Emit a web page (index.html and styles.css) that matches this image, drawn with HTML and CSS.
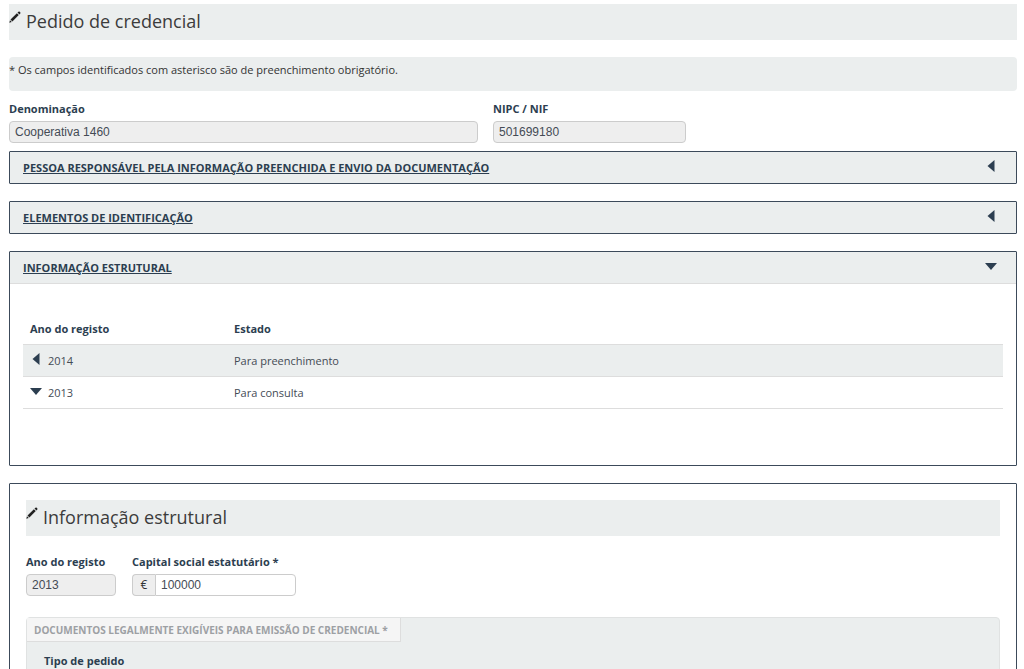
FILE: index.html
```html
<!DOCTYPE html>
<html lang="pt">
<head>
<meta charset="utf-8">
<title>Pedido de credencial</title>
<link rel="stylesheet" href="styles.css">
</head>
<body>
<svg class="sprite" aria-hidden="true">
  <symbol id="pencil" viewBox="0 0 12 12"><path d="M0.3 11.7 1 9.200 2.800 11z M1.500 8.600 7.900 2.200 9.800 4.100 3.400 10.500z M8.500 1.600 9.400 0.700Q10.100 0.200 10.800 0.800L11.200 1.200Q11.800 1.900 11.300 2.600L10.400 3.500z"/></symbol>
  <symbol id="left" viewBox="0 0 12 12"><path d="M9.500 0V12L2.500 6z"/></symbol>
  <symbol id="down" viewBox="0 0 12 12"><path d="M0 3H12L6 10z"/></symbol>
</svg>
<main class="page">
  <h1 class="title"><svg class="pencil" aria-hidden="true"><use href="#pencil"/></svg>Pedido de credencial</h1>
  <p class="notice">* Os campos identificados com asterisco são de preenchimento obrigatório.</p>
  <form>
    <div class="entity">
      <div class="field">
        <label for="name">Denominação</label>
        <input class="control" id="name" type="text" value="Cooperativa 1460" readonly>
      </div>
      <div class="field">
        <label for="nif">NIPC / NIF</label>
        <input class="control" id="nif" type="text" value="501699180" readonly>
      </div>
    </div>

    <section class="panel">
      <h2 class="panel-head"><a href="#pessoa">PESSOA RESPONSÁVEL PELA INFORMAÇÃO PREENCHIDA E ENVIO DA DOCUMENTAÇÃO</a><svg class="arrow" aria-hidden="true"><use href="#left"/></svg></h2>
    </section>
    <section class="panel">
      <h2 class="panel-head"><a href="#elementos">ELEMENTOS DE IDENTIFICAÇÃO</a><svg class="arrow" aria-hidden="true"><use href="#left"/></svg></h2>
    </section>
    <section class="panel">
      <h2 class="panel-head open"><a href="#informacao">INFORMAÇÃO ESTRUTURAL</a><svg class="arrow" aria-hidden="true"><use href="#down"/></svg></h2>
      <div class="panel-body">
        <table class="records">
          <thead>
            <tr><th class="year">Ano do registo</th><th>Estado</th></tr>
          </thead>
          <tbody>
            <tr><td><span class="toggle"><svg class="arrow" aria-hidden="true"><use href="#left"/></svg>2014</span></td><td>Para preenchimento</td></tr>
            <tr><td><span class="toggle"><svg class="arrow" aria-hidden="true"><use href="#down"/></svg>2013</span></td><td>Para consulta</td></tr>
          </tbody>
        </table>
      </div>
    </section>

    <section class="panel detail">
      <h2 class="title"><svg class="pencil" aria-hidden="true"><use href="#pencil"/></svg>Informação estrutural</h2>
      <div class="capital">
        <div class="field year-field">
          <label for="year">Ano do registo</label>
          <input class="control" id="year" type="text" value="2013" readonly>
        </div>
        <div class="field">
          <label for="amount">Capital social estatutário *</label>
          <div class="money">
            <span class="addon">€</span>
            <input class="control" id="amount" type="text" value="100000">
          </div>
        </div>
      </div>
      <div class="well">
        <h3 class="well-title">DOCUMENTOS LEGALMENTE EXIGÍVEIS PARA EMISSÃO DE CREDENCIAL *</h3>
        <p class="well-label">Tipo de pedido</p>
      </div>
    </section>
  </form>
</main>
</body>
</html>
```
FILE: styles.css
```css
* { box-sizing: border-box; }
html { scrollbar-width: none; }
body {
  margin: 0;
  background: #fff;
  color: #333;
  font: 11px/16px "Open Sans", "Noto Sans", sans-serif;
}
h1, h2, h3, p { margin: 0; }
.sprite { display: none; }
.page { padding: 4px 7px 0 9px; }

.title {
  display: flex;
  align-items: flex-start;
  gap: 5px;
  padding: 5px 0 6px;
  background: #ebeeee;
  color: #3c3c3c;
  font-size: 18px;
  line-height: 25px;
  font-weight: 400;
}
.pencil { width: 12px; height: 12px; margin-top: 2px; fill: #222; }

.notice {
  margin-top: 17px;
  padding: 5px 0 13px;
  border-radius: 4px;
  background: #ebeeee;
}

.entity {
  display: grid;
  grid-template-columns: 469fr 193fr 316fr;
  gap: 15px;
  margin-top: 10px;
}
.field { display: flex; flex-direction: column; gap: 4px; }
.field label { color: #2c3e50; font-weight: 700; }
.control {
  width: 100%;
  height: 22px;
  padding: 0 5px;
  border: 1px solid #ccc;
  border-radius: 4px;
  background: #fff;
  color: #444b55;
  font: 12px/16px "Liberation Sans", Arial, sans-serif;
}
.control:read-only { background: #eee; }

.panel { margin-top: 17px; border: 1px solid #3c4a5a; border-radius: 1px; }
.entity + .panel { margin-top: 8px; }
.panel-head {
  display: flex;
  justify-content: space-between;
  padding: 8px 19px 7px 13px;
  background: #ebeeee;
  font-size: 11px;
  line-height: 16px;
  font-weight: 700;
}
.panel-head.open { border-bottom: 1px solid #ddd; }
.panel-head a { color: #2c3e50; }
.arrow { width: 12px; height: 12px; fill: #2c3e50; }

.panel-body { padding: 29px 13px 56px; }
.records { width: 100%; border-collapse: collapse; color: #444b55; }
.records th, .records td {
  padding: 8px 7px 7px;
  border-bottom: 1px solid #ddd;
  text-align: left;
}
.records th { color: #2c3e50; font-weight: 700; }
.records .year { width: 204px; }
.records tbody tr:first-child { background: #ebeeee; }
.toggle { display: flex; gap: 6px; }

.detail { padding: 16px; }
.capital { display: flex; gap: 16px; margin-top: 18px; }
.year-field { width: 90px; }
.money { display: flex; width: 164px; }
.addon {
  flex: none;
  width: 23px;
  border: 1px solid #ccc;
  border-right: 0;
  border-radius: 4px 0 0 4px;
  background: #eee;
  font-size: 12px;
  line-height: 20px;
  text-align: center;
}
.money .control { border-radius: 0 4px 4px 0; }
.well {
  margin-top: 21px;
  padding-bottom: 40px;
  border: 1px solid #e0e2e2;
  border-radius: 4px;
  background: #ebeeee;
}
.well-title {
  width: fit-content;
  padding: 4px 12px 3px 7px;
  border: solid #ddd;
  border-width: 0 1px 1px 0;
  background: #f5f5f5;
  color: #9da0a4;
  font-size: 10px;
  line-height: 16px;
  font-weight: 700;
}
.well-label { margin: 11px 17px 0; color: #2c3e50; font-weight: 700; }
```
